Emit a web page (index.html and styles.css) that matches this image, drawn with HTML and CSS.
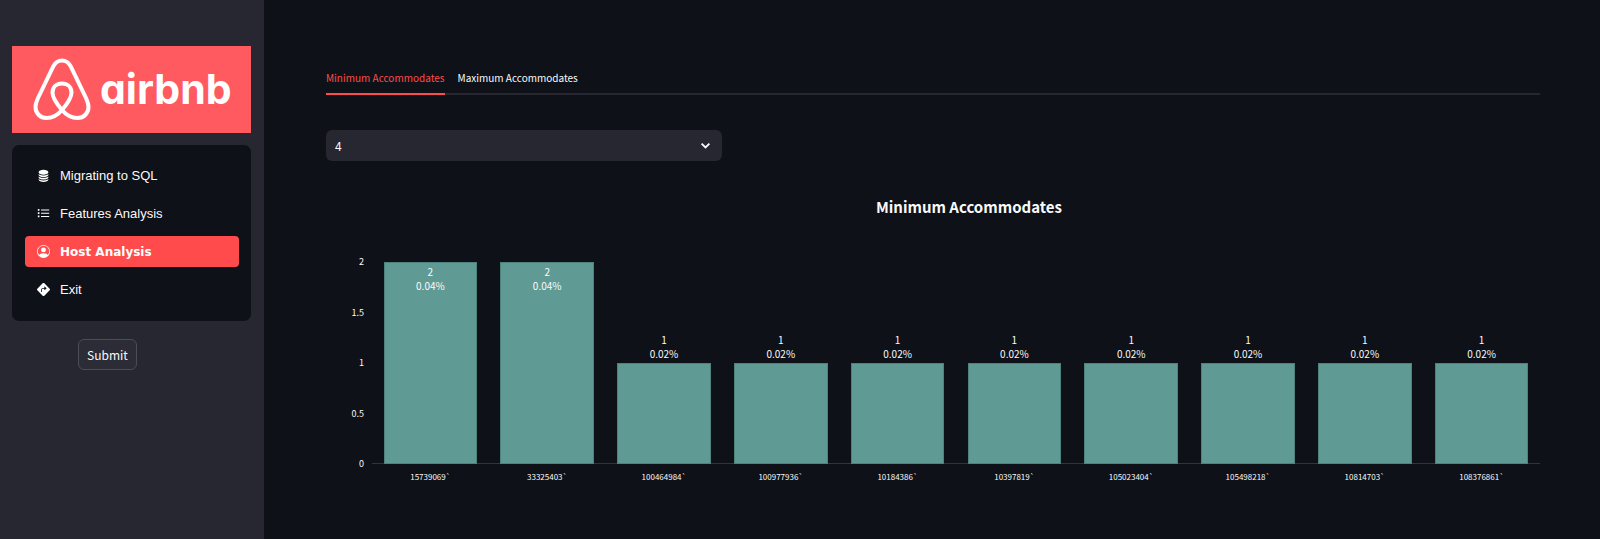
FILE: index.html
```html
<!DOCTYPE html>
<html lang="en">
<head>
<meta charset="utf-8">
<title>Host Analysis</title>
<link rel="stylesheet" href="styles.css">
</head>
<body>
<div class="app">
  <aside class="sidebar">
    <div class="logo">
      <svg class="logo-mark" viewBox="20 10 58 66" aria-hidden="true">
        <path d="M49 63C44 69 39 71 33.500 71C27 71 22.500 66 22.500 60C22.500 57 23 55.500 25 51L40.500 19C43 14.500 45.500 13.500 49 13.500C52.500 13.500 55 14.500 57.500 19L73 51C75 55.500 75.500 57 75.500 60C75.500 66 71 71 64.500 71C59 71 54 69 49 63C43 56 39.500 51 39.500 45.500C39.500 40 43.500 36.500 49 36.500C54.500 36.500 58.500 40 58.500 45.500C58.500 51 55 56 49 63Z"/>
      </svg>
      <span class="logo-text">airbnb</span>
    </div>
    <nav class="menu">
      <a class="menu-item" href="#sql">
        <svg class="icon" viewBox="0 0 16 16" aria-hidden="true"><path d="M3.904 1.777C4.978 1.289 6.427 1 8 1s3.022.289 4.096.777C13.125 2.245 14 2.993 14 4s-.875 1.755-1.904 2.223C11.022 6.711 9.573 7 8 7s-3.022-.289-4.096-.777C2.875 5.755 2 5.007 2 4s.875-1.755 1.904-2.223Z"/><path d="M2 6.161V7c0 1.007.875 1.755 1.904 2.223C4.978 9.710 6.427 10 8 10s3.022-.289 4.096-.777C13.125 8.755 14 8.007 14 7v-.839c-.457.432-1.004.751-1.490.972C11.278 7.693 9.682 8 8 8s-3.278-.307-4.510-.867c-.486-.220-1.033-.540-1.490-.972Z"/><path d="M2 9.161V10c0 1.007.875 1.755 1.904 2.223C4.978 12.710 6.427 13 8 13s3.022-.289 4.096-.777C13.125 11.755 14 11.007 14 10v-.839c-.457.432-1.004.751-1.490.972C11.278 10.693 9.682 11 8 11s-3.278-.307-4.510-.867c-.486-.220-1.033-.540-1.490-.972Z"/><path d="M2 12.161V13c0 1.007.875 1.755 1.904 2.223C4.978 15.710 6.427 16 8 16s3.022-.289 4.096-.777C13.125 14.755 14 14.007 14 13v-.839c-.457.432-1.004.751-1.490.972C11.278 13.693 9.682 14 8 14s-3.278-.307-4.510-.867c-.486-.220-1.033-.540-1.490-.972Z"/></svg>
        <span>Migrating to SQL</span>
      </a>
      <a class="menu-item" href="#features">
        <svg class="icon" viewBox="0 0 16 16" aria-hidden="true"><path d="M1 2.500h2v2H1zM1 6.500h2v2H1zM1 10.500h2v2H1zM5 3h10v1.200H5zM5 7h10v1.200H5zM5 11h10v1.200H5z"/></svg>
        <span>Features Analysis</span>
      </a>
      <a class="menu-item active" href="#host" aria-current="page">
        <svg class="icon" viewBox="0 0 16 16" aria-hidden="true"><path d="M11 6a3 3 0 1 1-6 0 3 3 0 0 1 6 0"/><path fill-rule="evenodd" d="M0 8a8 8 0 1 1 16 0A8 8 0 0 1 0 8m8-7a7 7 0 0 0-5.468 11.370C3.242 11.226 4.805 10 8 10s4.757 1.225 5.468 2.370A7 7 0 0 0 8 1"/></svg>
        <span>Host Analysis</span>
      </a>
      <a class="menu-item" href="#exit">
        <svg class="icon" viewBox="0 0 16 16" aria-hidden="true"><path fill-rule="evenodd" d="M9.050.435c-.580-.580-1.520-.580-2.100 0L.436 6.950c-.580.580-.580 1.519 0 2.098l6.516 6.516c.580.580 1.519.580 2.098 0l6.516-6.516c.580-.580.580-1.519 0-2.098zM9 8.466V7H7.500A1.500 1.500 0 0 0 6 8.500V11H5V8.500A2.500 2.500 0 0 1 7.500 6H9V4.534a.250.250 0 0 1 .410-.192l2.360 1.966c.120.100.120.284 0 .384L9.410 8.658A.250.250 0 0 1 9 8.466"/></svg>
        <span>Exit</span>
      </a>
    </nav>
    <button class="submit" type="button">Submit</button>
  </aside>

  <main class="main">
    <div class="tabs" role="tablist">
      <button class="tab selected" type="button" role="tab" aria-selected="true">Minimum Accommodates</button>
      <button class="tab" type="button" role="tab" aria-selected="false">Maximum Accommodates</button>
    </div>
    <div class="filters">
      <div class="select-wrap">
        <select class="select" aria-label="Accommodates"><option>4</option></select>
        <svg class="chevron" viewBox="0 0 10 10" aria-hidden="true"><path d="M2 3.500L5 6.500L8 3.500"/></svg>
      </div>
    </div>
    <section class="chart">
      <h2 class="chart-title">Minimum Accommodates</h2>
      <div class="chart-body">
        <div class="y-axis"><span>2</span><span>1.5</span><span>1</span><span>0.5</span><span>0</span></div>
        <div class="plot">
          <div class="slot"><div class="bar" style="height:100%"><span>2</span><span>0.04%</span></div></div>
          <div class="slot"><div class="bar" style="height:100%"><span>2</span><span>0.04%</span></div></div>
          <div class="slot"><div class="value"><span>1</span><span>0.02%</span></div><div class="bar" style="height:50%"></div></div>
          <div class="slot"><div class="value"><span>1</span><span>0.02%</span></div><div class="bar" style="height:50%"></div></div>
          <div class="slot"><div class="value"><span>1</span><span>0.02%</span></div><div class="bar" style="height:50%"></div></div>
          <div class="slot"><div class="value"><span>1</span><span>0.02%</span></div><div class="bar" style="height:50%"></div></div>
          <div class="slot"><div class="value"><span>1</span><span>0.02%</span></div><div class="bar" style="height:50%"></div></div>
          <div class="slot"><div class="value"><span>1</span><span>0.02%</span></div><div class="bar" style="height:50%"></div></div>
          <div class="slot"><div class="value"><span>1</span><span>0.02%</span></div><div class="bar" style="height:50%"></div></div>
          <div class="slot"><div class="value"><span>1</span><span>0.02%</span></div><div class="bar" style="height:50%"></div></div>
        </div>
        <div class="x-axis"><span>15739069`</span><span>33325403`</span><span>100464984`</span><span>100977936`</span><span>10184386`</span><span>10397819`</span><span>105023404`</span><span>105498218`</span><span>10814703`</span><span>108376861`</span></div>
      </div>
    </section>
  </main>
</div>
</body>
</html>
```
FILE: styles.css
```css
* { box-sizing: border-box; }

body {
  margin: 0;
  background: #0e1117;
  color: #fafafa;
  font-family: "Noto Sans CJK SC", "Noto Sans", sans-serif;
}

button, select { font-family: inherit; color: inherit; }

.app {
  display: grid;
  grid-template-columns: 264px 1fr;
  min-height: 100vh;
}

.sidebar {
  display: flex;
  flex-direction: column;
  background: #262730;
  padding: 46px 13px 0 12px;
}

.logo {
  display: flex;
  align-items: center;
  height: 87px;
  padding-left: 21px;
  gap: 9px;
  background: #ff5a60;
}

.logo-mark {
  width: 58px;
  height: 66px;
  fill: none;
  stroke: #fff;
  stroke-width: 4;
}

.logo-text {
  padding-bottom: 2px;
  color: #fff;
  font: 700 41px/48px Inter, sans-serif;
  font-feature-settings: "cv11";
}

.menu {
  display: flex;
  flex-direction: column;
  gap: 7px;
  margin-top: 12px;
  padding: 15px 12px 16px 13px;
  border-radius: 7px;
  background: #0e1117;
}

.menu-item {
  display: flex;
  align-items: center;
  gap: 10px;
  height: 31px;
  padding: 0 12px;
  border-radius: 4px;
  color: #fafafa;
  font: 13px/20px "Liberation Sans", Arial, sans-serif;
  text-decoration: none;
}

.menu-item.active {
  background: #ff4b4b;
  color: #fff;
  font: 700 12px/20px "DejaVu Sans", sans-serif;
}

.icon { width: 13px; height: 13px; fill: #fff; }

.submit {
  width: 59px;
  height: 31px;
  margin: 18px 0 0 66px;
  padding: 0;
  border: 1px solid #4b4c54;
  border-radius: 6px;
  background: #2b2c36;
  font-size: 12px;
  line-height: 20px;
}

.main { padding: 62px 60px 0 62px; }

.tabs {
  display: flex;
  gap: 13px;
  box-shadow: inset 0 -2px #262730;
}

.tab {
  height: 33px;
  padding: 0;
  border: 0;
  border-bottom: 2px solid transparent;
  background: none;
  font-size: 10px;
  line-height: 31px;
}

.tab.selected { color: #ff4b4b; border-color: #ff4b4b; }

.filters {
  display: grid;
  grid-template-columns: repeat(3, 1fr);
  gap: 13px;
  margin-top: 35px;
}

.select-wrap { position: relative; }

.select {
  display: block;
  width: 100%;
  height: 31px;
  padding: 0 9px;
  border: 0;
  border-radius: 6px;
  appearance: none;
  background: #262730;
  font-size: 12px;
}

.chevron {
  position: absolute;
  top: 9px;
  right: 10px;
  width: 13px;
  height: 13px;
  fill: none;
  stroke: #fafafa;
  stroke-width: 1.4;
  pointer-events: none;
}

.chart-title {
  margin: 34px 0 0;
  padding-left: 45.3%;
  font-size: 15px;
  font-weight: 700;
  line-height: 24px;
  white-space: nowrap;
}

.chart-body {
  display: grid;
  grid-template-columns: 38px 1fr;
  grid-template-rows: 202px auto;
  column-gap: 8px;
  row-gap: 7px;
  margin-top: 43px;
}

.y-axis {
  display: flex;
  flex-direction: column;
  justify-content: space-between;
  margin: -6px 0;
  text-align: right;
  font-size: 9px;
  line-height: 12px;
}

.plot {
  display: grid;
  grid-template-columns: repeat(10, 1fr);
  background: linear-gradient(#31343a, #31343a) bottom / 100% 1px no-repeat;
}

.slot {
  display: flex;
  flex-direction: column;
  align-items: center;
  justify-content: flex-end;
  min-height: 0;
}

.bar, .value {
  display: flex;
  flex-direction: column;
  align-items: center;
  font-size: 10px;
  line-height: 14px;
}

.value { padding-bottom: 2px; }

.bar {
  width: 80%;
  padding-top: 3px;
  background: #5f9a94;
  box-shadow: inset 0 0 0 1px #4e827d;
}

.x-axis {
  grid-column: 2;
  display: grid;
  grid-template-columns: repeat(10, 1fr);
  text-align: center;
  font-size: 8px;
  line-height: 12px;
}
```
